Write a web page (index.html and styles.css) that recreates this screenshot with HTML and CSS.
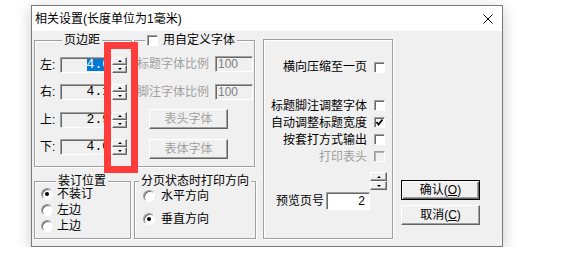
FILE: index.html
```html
<!DOCTYPE html>
<html lang="zh-CN">
<head>
  <meta charset="UTF-8">
  <title>相关设置</title>
  <link rel="stylesheet" href="styles.css">
</head>
<body>
  <div class="window">
    <div class="titlebar">
      <span class="title">相关设置(长度单位为1毫米)</span>
      <svg class="close" width="10" height="10" viewBox="0 0 10 10">
        <path d="M0.5 0.5 L9.5 9.5 M9.5 0.5 L0.5 9.5" stroke="#000" stroke-width="1" fill="none"/>
      </svg>
    </div>

    <div class="content">
      <div class="left-col">
        <div class="row-top">
          <div class="group margins">
            <div class="legend">页边距</div>
            <div class="rows">
              <div class="spin-row">
                <span class="lbl">左:</span>
                <div class="field"><span class="sel">4.0</span></div>
                <div class="spin"><span class="up"></span><span class="down"></span></div>
              </div>
              <div class="spin-row">
                <span class="lbl">右:</span>
                <div class="field"><span>4.1</span></div>
                <div class="spin"><span class="up"></span><span class="down"></span></div>
              </div>
              <div class="spin-row">
                <span class="lbl">上:</span>
                <div class="field"><span>2.9</span></div>
                <div class="spin"><span class="up"></span><span class="down"></span></div>
              </div>
              <div class="spin-row">
                <span class="lbl">下:</span>
                <div class="field"><span>4.0</span></div>
                <div class="spin"><span class="up"></span><span class="down"></span></div>
              </div>
            </div>
          </div>

          <div class="group fonts">
            <div class="legend legend-check"><span class="cb"></span>用自定义字体</div>
            <div class="ratio-row first">
              <span class="dis">标题字体比例</span>
              <div class="num-dis">100</div>
            </div>
            <div class="ratio-row second">
              <span class="dis">脚注字体比例</span>
              <div class="num-dis">100</div>
            </div>
            <div class="btn btn-dis first">表头字体</div>
            <div class="btn btn-dis second">表体字体</div>
          </div>
        </div>

        <div class="row-bottom">
          <div class="group bind">
            <div class="legend">装订位置</div>
            <div class="radios">
              <div class="radio-row"><span class="rb on"></span>不装订</div>
              <div class="radio-row"><span class="rb"></span>左边</div>
              <div class="radio-row"><span class="rb"></span>上边</div>
            </div>
          </div>
          <div class="group orient">
            <div class="legend">分页状态时打印方向</div>
            <div class="radios">
              <div class="radio-row"><span class="rb"></span>水平方向</div>
              <div class="radio-row"><span class="rb on"></span>垂直方向</div>
            </div>
          </div>
        </div>
      </div>

      <div class="group options">
        <div class="opt-row first">横向压缩至一页<span class="cb"></span></div>
        <div class="opt-row second">标题脚注调整字体<span class="cb"></span></div>
        <div class="opt-row">自动调整标题宽度<span class="cb">
          <svg width="9" height="9" viewBox="0 0 9 9"><path d="M1.5 4 L3.5 6.5 L7.5 1.5" stroke="#000" stroke-width="1.8" fill="none"/></svg>
        </span></div>
        <div class="opt-row">按套打方式输出<span class="cb"></span></div>
        <div class="opt-row disabled">打印表头<span class="cb cb-dis"></span></div>
        <div class="spin spin-big"><span class="up"></span><span class="down"></span></div>
        <div class="page-row">
          <span>预览页号</span>
          <div class="num">2</div>
        </div>
      </div>

      <div class="actions">
        <div class="btn btn-default">确认(<u>O</u>)</div>
        <div class="btn">取消(<u>C</u>)</div>
      </div>
    </div>

    <div class="marker"></div>
  </div>
</body>
</html>
```

FILE: styles.css
```css
* {
  box-sizing: border-box;
}
body {
  margin: 0;
  background: #fff;
  font-family: "Liberation Sans", "Noto Sans CJK SC", sans-serif;
  font-size: 12px;
  line-height: 16px;
  color: #000;
}
.window {
  position: relative;
  width: 472px;
  height: 242px;
  margin: 5px 0 0 31px;
  border: 1px solid #7a7a7a;
  background: #f0f0f0;
  box-shadow: 0 4px 14px rgba(0, 0, 0, 0.22);
}
.titlebar {
  display: flex;
  align-items: center;
  justify-content: space-between;
  height: 25px;
  padding: 0 9px 0 3px;
  background: #fff;
}
.content {
  display: flex;
  align-items: flex-start;
  height: 215px;
  padding: 9px 0 0 2px;
}

/* group boxes */
.group {
  border: 1px solid #a0a0a0;
  box-shadow: inset 1px 1px #fff, 1px 1px #fff;
}
.legend {
  width: fit-content;
  height: 16px;
  margin-top: -9px;
  padding: 0 2px;
  background: #f0f0f0;
  white-space: nowrap;
}
.left-col {
  width: 222px;
  margin-right: 7px;
}
.row-top {
  display: flex;
  gap: 2px;
}
.row-bottom {
  display: flex;
  gap: 3px;
  margin-top: 14px;
}

/* margins */
.margins {
  width: 98px;
  height: 127px;
}
.margins .legend {
  margin-left: 27px;
}
.margins .rows {
  display: flex;
  flex-direction: column;
  gap: 11.33px;
  padding: 9px 0 0 5px;
}
.spin-row {
  display: flex;
  align-items: center;
  height: 16px;
}
.lbl {
  width: 20px;
}
.field {
  display: flex;
  justify-content: flex-end;
  align-items: center;
  width: 52px;
  height: 16px;
  padding-right: 1px;
  overflow: hidden;
  border: 1px solid;
  border-color: #a0a0a0 #fff #fff #a0a0a0;
  box-shadow: inset 1px 1px #696969;
  background: #f0f0f0;
  font-family: "Liberation Mono", monospace;
  font-size: 13px;
}
.field span {
  line-height: 12px;
}
.field .sel {
  background: #0078d7;
  color: #fff;
}
.spin {
  display: flex;
  flex-direction: column;
  width: 15px;
  height: 16px;
}
.spin span {
  flex: 1;
  display: flex;
  align-items: center;
  justify-content: center;
  border: 1px solid;
  border-color: #fff #646464 #646464 #fff;
  box-shadow: inset -1px -1px #a0a0a0;
  background: #f0f0f0;
}
.spin .up::before,
.spin .down::before {
  content: "";
  border-left: 2px solid transparent;
  border-right: 2px solid transparent;
}
.spin .up::before {
  border-bottom: 2px solid #000;
}
.spin .down::before {
  border-top: 2px solid #000;
}

/* custom fonts */
.fonts {
  width: 121px;
  height: 127px;
}
.legend-check {
  display: flex;
  align-items: center;
  gap: 5px;
  margin-left: 10px;
}
.cb {
  display: flex;
  align-items: center;
  justify-content: center;
  width: 11px;
  height: 11px;
  flex: none;
  border: 1px solid;
  border-color: #a0a0a0 #fff #fff #a0a0a0;
  box-shadow: inset 1px 1px #696969;
  background: #fff;
}
.cb-dis {
  background: #f0f0f0;
  box-shadow: inset 1px 1px #b4b4b4;
}
.ratio-row {
  display: flex;
  justify-content: flex-end;
  align-items: center;
  gap: 6px;
  height: 16px;
  padding-right: 1px;
  white-space: nowrap;
}
.ratio-row.first {
  margin-top: 8px;
}
.ratio-row.second {
  margin-top: 12px;
}
.dis {
  color: #a0a0a0;
}
.num-dis {
  width: 38px;
  height: 16px;
  padding-left: 2px;
  border: 1px solid;
  border-color: #a0a0a0 #fff #fff #a0a0a0;
  box-shadow: inset 1px 1px #696969;
  color: #808080;
  line-height: 14px;
}
.btn {
  display: flex;
  align-items: center;
  justify-content: center;
  width: 79px;
  height: 20px;
  border: 1px solid;
  border-color: #fff #646464 #646464 #fff;
  box-shadow: inset -1px -1px #a0a0a0;
  background: #f0f0f0;
}
.btn-dis {
  margin-left: 14px;
  color: #a0a0a0;
}
.btn-dis.first {
  margin-top: 9px;
}
.btn-dis.second {
  margin-top: 10px;
}

/* binding and direction */
.bind {
  width: 97px;
  height: 58px;
}
.bind .legend {
  margin-left: 21px;
}
.bind .radios {
  margin-top: -3px;
  padding-left: 6px;
}
.orient {
  width: 122px;
  height: 58px;
}
.orient .legend {
  margin-left: 4px;
}
.orient .radios {
  display: flex;
  flex-direction: column;
  gap: 7px;
  margin-top: -1px;
  padding-left: 8px;
}
.radio-row {
  display: flex;
  align-items: center;
  gap: 4px;
  height: 16px;
}
.orient .radio-row {
  gap: 6px;
}
.rb {
  display: flex;
  align-items: center;
  justify-content: center;
  width: 12px;
  height: 12px;
  border-radius: 50%;
  border: 1px solid;
  border-color: #a0a0a0 #fff #fff #a0a0a0;
  box-shadow: inset 1px 1px #696969;
  background: #fff;
}
.rb.on::after {
  content: "";
  width: 4px;
  height: 4px;
  border-radius: 50%;
  background: #000;
}

/* options */
.options {
  display: flex;
  flex-direction: column;
  width: 130px;
  height: 200px;
  margin-top: -1px;
}
.opt-row {
  display: flex;
  justify-content: flex-end;
  align-items: center;
  gap: 7px;
  height: 17px;
  padding-right: 7px;
  white-space: nowrap;
}
.opt-row.first {
  height: 16px;
  margin-top: 19px;
}
.opt-row.second {
  margin-top: 22px;
}
.opt-row.disabled {
  color: #a0a0a0;
}
.spin-big {
  align-self: flex-end;
  width: 17px;
  height: 18px;
  margin: 7px 5px 0 0;
}
.page-row {
  display: flex;
  justify-content: flex-end;
  align-items: center;
  gap: 2px;
  height: 18px;
  margin-top: 2px;
  padding-right: 22px;
}
.num {
  width: 44px;
  height: 18px;
  padding-right: 4px;
  border: 1px solid;
  border-color: #a0a0a0 #fff #fff #a0a0a0;
  box-shadow: inset 1px 1px #696969;
  background: #fff;
  text-align: right;
}

/* buttons */
.actions {
  display: flex;
  flex-direction: column;
  gap: 5px;
  margin: 140px 0 0 8px;
}
.btn-default {
  border: 1px solid #000;
  box-shadow: inset 1px 1px #fff, inset -1px -1px #646464, inset -2px -2px #a0a0a0;
}

/* annotation */
.marker {
  position: absolute;
  left: 72px;
  top: 36px;
  width: 34px;
  height: 131px;
  border: 7px solid #ff3c3c;
}
```
